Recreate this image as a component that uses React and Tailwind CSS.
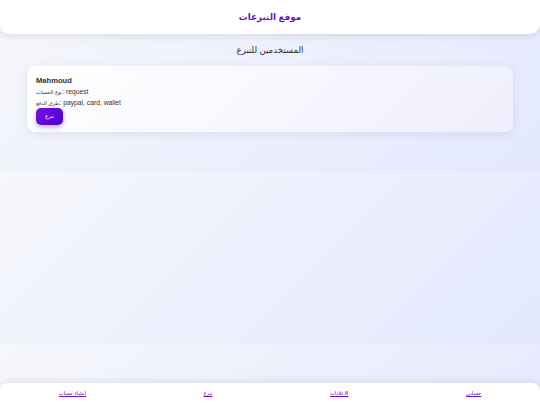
export default function App() {
  const users = [
    { name: "Mahmoud", type: "request", methods: "paypal, card, wallet" },
  ];
  const links = ["حسابي", "الاعلانات", "تبرع", "انشاء حساب"];

  return (
    <div className="min-h-[405px] bg-[linear-gradient(135deg,#f6f7fb,#e3e8fe)] bg-[length:100%_172px] bg-repeat font-['Liberation_Sans','DejaVu_Sans',sans-serif] text-[#333]">
      <header className="flex h-[34px] items-center justify-center rounded-b-[10px] bg-white shadow-[0_2px_8px_rgba(0,0,0,0.1)]">
        <h1 className="pt-[1px] text-[8.8px] font-bold text-[#6a11cb]" dir="rtl">
          موقع التبرعات
        </h1>
      </header>

      <main className="px-[27px] pt-[9px]">
        <h2 className="text-center text-[8.6px] leading-[14px]" dir="rtl">
          المستخدمين للتبرع
        </h2>

        <div className="mt-[9px] flex flex-col gap-3">
          {users.map((u, i) => (
            <div
              key={i}
              className="rounded-[8px] bg-[linear-gradient(135deg,#ffffff,#efeffd)] px-[9px] pt-[10px] pb-[7px] shadow-[0_2px_8px_rgba(80,80,160,0.12)]"
            >
              <h3 className="text-[7.6px] font-bold leading-[10px]">{u.name}</h3>
              <p className="text-[6.75px] leading-[11px]">
                <span className="text-[5.2px]">نوع الحساب</span>: {u.type}
              </p>
              <p className="text-[6.75px] leading-[10px]">
                <span className="text-[5.2px]">طرق الدفع</span>: {u.methods}
              </p>
              <button className="block h-[17px] w-[27px] rounded-[5px] bg-[linear-gradient(135deg,#7312d9,#4a00dc)] text-[5.2px] text-white shadow-[0_2px_5px_rgba(90,0,200,0.35)]">
                تبرع
              </button>
            </div>
          ))}
        </div>
      </main>

      <footer
        dir="rtl"
        className="fixed inset-x-0 bottom-0 flex h-[22px] items-center justify-around rounded-t-[8px] bg-white shadow-[0_-2px_8px_rgba(0,0,0,0.08)]"
      >
        {links.map((l) => (
          <a
            key={l}
            href="#"
            className="text-[5.2px] text-[#6a11cb] underline"
          >
            {l}
          </a>
        ))}
      </footer>
    </div>
  );
}
